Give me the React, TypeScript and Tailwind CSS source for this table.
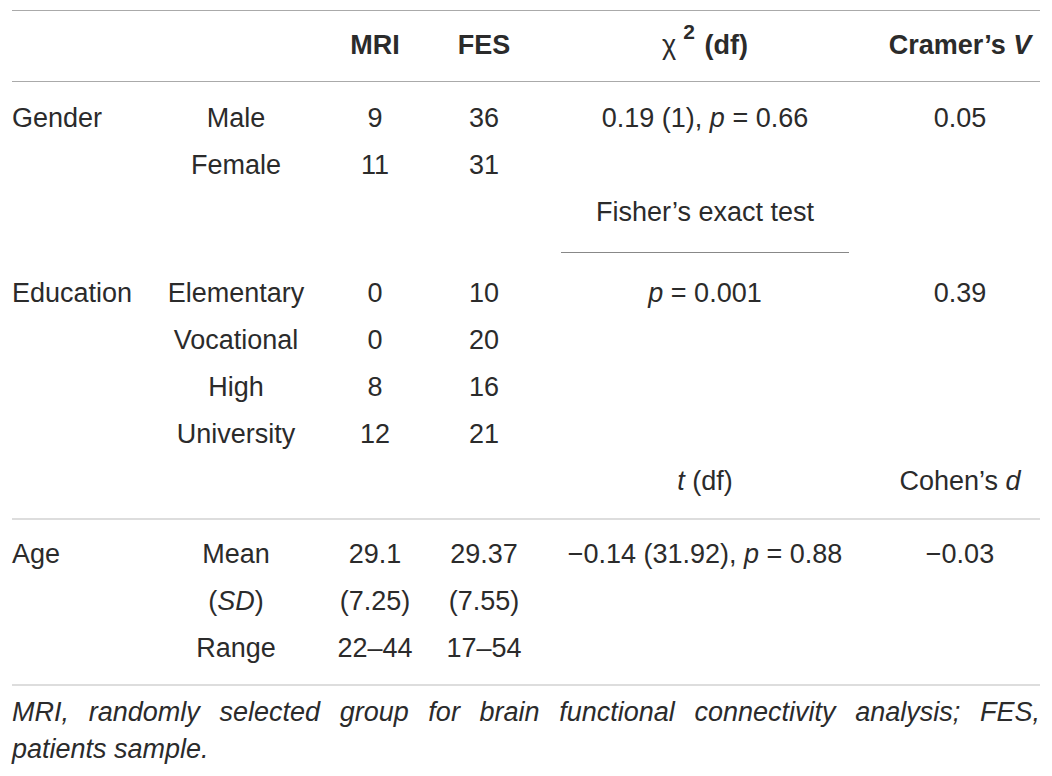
import React from 'react'

const grid =
  'grid grid-cols-[148px_152px_126px_92px_350px_160px] h-[47px] leading-[47px] whitespace-nowrap'

interface RowProps {
  cells: React.ReactNode[]
  className?: string
}

function Row({ cells, className = '' }: RowProps) {
  return (
    <div className={`${grid} ${className}`}>
      {cells.map((c, i) => (
        <div key={i} className={i === 0 ? 'text-left' : 'text-center'}>
          {c}
        </div>
      ))}
    </div>
  )
}

const P = () => <i>p</i>

export default function App() {
  return (
    <div
      className="bg-white w-[1052px] h-[776px] pt-[10px] pl-[12px] text-[27px] text-[#2b2b2b]"
      style={{ fontFamily: '"Liberation Sans", Arial, sans-serif' }}
    >
      <div className="w-[1028px]">
        <div className="border-t border-[#aaaaaa] pt-[11px] pb-[12px] border-b">
          <Row
            className="font-bold"
            cells={[
              '',
              '',
              'MRI',
              'FES',
              <span>
                <span className="font-normal">χ</span>
                <sup className="text-[21px] ml-[7px] mr-[2px] relative top-[-15px]">2</sup> (df)
              </span>,
              <span>
                Cramer’s <i>V</i>
              </span>,
            ]}
          />
        </div>
        <div className="pt-[13px]">
          <Row cells={['Gender', 'Male', '9', '36', <span>0.19 (1), <P /> = 0.66</span>, '0.05']} />
          <Row cells={['', 'Female', '11', '31', '', '']} />
          <Row cells={['', '', '', '', 'Fisher’s exact test', '']} />
        </div>
        <div className="grid grid-cols-[148px_152px_126px_92px_350px_160px] mt-[16px]">
          <div className="col-start-5 mx-[31px] border-t border-[#888888]" />
        </div>
        <div className="pt-[17px] pb-[13px] border-b-2 border-[#dddddd]">
          <Row cells={['Education', 'Elementary', '0', '10', <span><P /> = 0.001</span>, '0.39']} />
          <Row cells={['', 'Vocational', '0', '20', '', '']} />
          <Row cells={['', 'High', '8', '16', '', '']} />
          <Row cells={['', 'University', '12', '21', '', '']} />
          <Row
            cells={[
              '',
              '',
              '',
              '',
              <span>
                <i>t</i> (df)
              </span>,
              <span>
                Cohen’s <i>d</i>
              </span>,
            ]}
          />
        </div>
        <div className="pt-[11px] pb-[12px] border-b-2 border-[#dddddd]">
          <Row cells={['Age', 'Mean', '29.1', '29.37', <span>−0.14 (31.92), <P /> = 0.88</span>, '−0.03']} />
          <Row cells={['', <span>(<i>SD</i>)</span>, '(7.25)', '(7.55)', '', '']} />
          <Row cells={['', 'Range', '22–44', '17–54', '', '']} />
        </div>
        <div className="italic leading-[37px] pt-[8px]">
          <p className="text-justify [text-align-last:justify]">
            MRI, randomly selected group for brain functional connectivity analysis; FES,
          </p>
          <p>patients sample.</p>
        </div>
      </div>
    </div>
  )
}
